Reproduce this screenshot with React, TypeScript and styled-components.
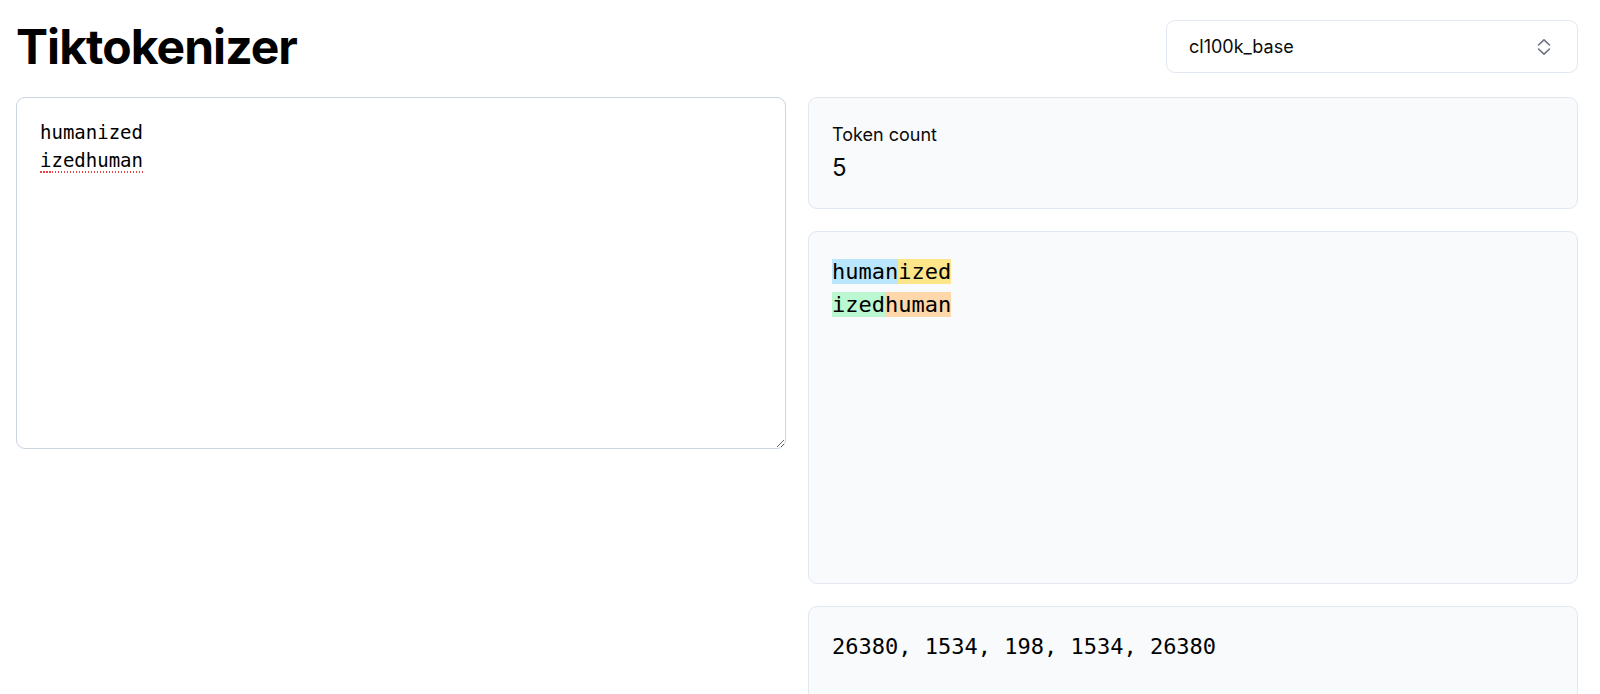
import React from "react";
import styled, { createGlobalStyle } from "styled-components";

const GlobalStyle = createGlobalStyle`
  html, body { margin: 0; padding: 0; background: #ffffff; }
  body { font-family: Inter, "Noto Sans", "Liberation Sans", sans-serif; color: #0a0a0a; }
  * { box-sizing: border-box; }
`;

const Page = styled.main`
  padding: 20px 22px 0 16px;
`;

const Header = styled.header`
  display: flex;
  align-items: center;
  justify-content: space-between;
  height: 53px;
`;

const Title = styled.h1`
  margin: 0;
  font-size: 48px;
  font-weight: 700;
  letter-spacing: -0.95px;
  line-height: 1;
  color: #000;
`;

const SelectBox = styled.button`
  width: 412px;
  height: 53px;
  display: flex;
  align-items: center;
  justify-content: space-between;
  padding: 0 26px 0 22px;
  background: #fff;
  border: 1px solid #e2e8f0;
  border-radius: 9px;
  font-family: Inter, "Noto Sans", sans-serif;
  font-size: 18px;
  color: #0a0a0a;
  cursor: pointer;
`;

const Grid = styled.div`
  display: grid;
  grid-template-columns: 1fr 1fr;
  column-gap: 22px;
  margin-top: 24px;
  align-items: start;
`;

const EditorWrap = styled.div`
  position: relative;
`;

const Editor = styled.textarea`
  display: block;
  width: 100%;
  height: 352px;
  padding: 21px 23px;
  border: 1px solid #cbd5e1;
  border-radius: 9px;
  background: #fff;
  font-family: "DejaVu Sans Mono", "Liberation Mono", monospace;
  font-size: 19px;
  line-height: 27.5px;
  color: #000;
  resize: vertical;
  outline: none;
`;

const Squiggle = styled.span`
  position: absolute;
  left: 24px;
  top: 74px;
  width: 103px;
  height: 2px;
  background: repeating-linear-gradient(90deg, #ef4444 0 1.5px, transparent 1.5px 3px);
  pointer-events: none;
`;

const Column = styled.div`
  display: flex;
  flex-direction: column;
  gap: 22px;
`;

const Panel = styled.section<{ $minHeight?: number }>`
  background: #f8fafc;
  border: 1px solid #e2e8f0;
  border-radius: 9px;
  padding: 23px 23px 24px;
  min-height: ${(p) => (p.$minHeight ? `${p.$minHeight}px` : "auto")};
`;

const Label = styled.div`
  font-size: 18px;
  line-height: 27px;
  color: #0a0a0a;
`;

const Count = styled.div`
  margin-top: 4px;
  font-size: 24px;
  line-height: 32px;
  color: #0a0a0a;
`;

const Mono = styled.pre`
  margin: 0;
  font-family: "DejaVu Sans Mono", "Liberation Mono", monospace;
  font-size: 22px;
  line-height: 33px;
  color: #000;
  white-space: pre-wrap;
`;

const Token = styled.span<{ $bg: string }>`
  background: ${(p) => p.$bg};
`;

const ChevronsIcon = () => (
  <svg width="14" height="18" viewBox="0 0 14 18" fill="none" stroke="#6b7280" strokeWidth="1.6" strokeLinecap="round" strokeLinejoin="round">
    <polyline points="1.5,7 7,1.8 12.5,7" />
    <polyline points="1.5,11 7,16.2 12.5,11" />
  </svg>
);

const colors = {
  blue: "#bae6fd",
  yellow: "#fde68a",
  green: "#bbf7d0",
  orange: "#fed7aa",
};

export default function App() {
  return (
    <>
      <GlobalStyle />
      <Page>
        <Header>
          <Title>Tiktokenizer</Title>
          <SelectBox>
            <span>cl100k_base</span>
            <ChevronsIcon />
          </SelectBox>
        </Header>
        <Grid>
          <EditorWrap>
            <Editor defaultValue={"humanized\nizedhuman"} spellCheck={false} />
            <Squiggle />
          </EditorWrap>
          <Column>
            <Panel>
              <Label>Token count</Label>
              <Count>5</Count>
            </Panel>
            <Panel $minHeight={353}>
              <Mono>
                <Token $bg={colors.blue}>human</Token>
                <Token $bg={colors.yellow}>ized</Token>
                {"\n"}
                <Token $bg={colors.green}>ized</Token>
                <Token $bg={colors.orange}>human</Token>
              </Mono>
            </Panel>
            <Panel $minHeight={200}>
              <Mono>26380, 1534, 198, 1534, 26380</Mono>
            </Panel>
          </Column>
        </Grid>
      </Page>
    </>
  );
}
